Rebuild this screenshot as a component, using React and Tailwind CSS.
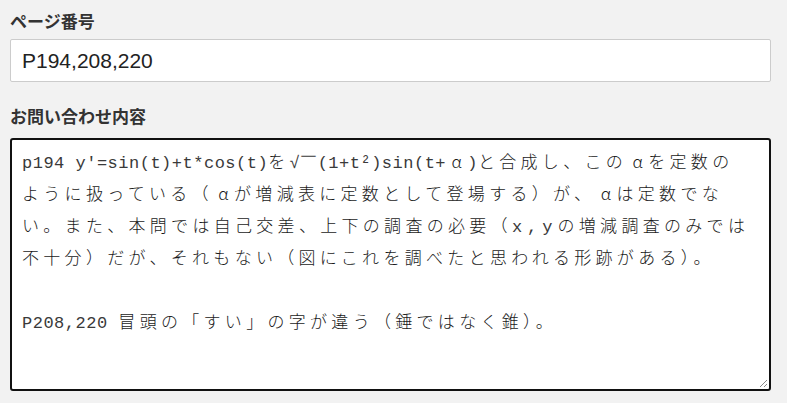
import React from 'react';

const lines = [
  "p194 y'=sin(t)+t*cos(t)を√￣(1+t²)sin(t+α)と合成し、このαを定数の",
  "ように扱っている（αが増減表に定数として登場する）が、αは定数でな",
  "い。また、本問では自己交差、上下の調査の必要（x,yの増減調査のみでは",
  "不十分）だが、それもない（図にこれを調べたと思われる形跡がある）。",
  "",
  "P208,220 冒頭の「すい」の字が違う（錘ではなく錐）。",
];

// split a line into half-width / full-width runs; α gets its own cell
function segments(line) {
  const out = [];
  for (const ch of line) {
    const kind = ch === 'α' ? 'alpha' : /[\x20-\x7E²√￣]/.test(ch) ? 'half' : 'full';
    const last = out[out.length - 1];
    if (last && last.kind === kind && kind !== 'alpha') last.text += ch;
    else out.push({ kind, text: ch });
  }
  return out;
}

function Line({ text }) {
  if (!text) return <div className="h-[32px]" />;
  return (
    <div className="h-[32px] leading-[32px] whitespace-pre">
      {segments(text).map((s, i) => {
        if (s.kind === 'half')
          return (
            <span
              key={i}
              className={
                s.text === 'x,y'
                  ? "font-['Liberation_Mono',monospace] text-[17px] text-[#3a3a3a] tracking-[5px]"
                  : "font-['Liberation_Mono',monospace] text-[17px] text-[#3a3a3a] tracking-[0.5px]"
              }
            >
              {s.text}
            </span>
          );
        if (s.kind === 'alpha')
          return <span key={i} className="inline-block w-[21.2px] text-center font-['Noto_Sans_CJK_JP',sans-serif] font-light text-[17px]">{s.text}</span>;
        return <span key={i} className="font-['Noto_Sans_CJK_JP',sans-serif] font-light text-[17px] tracking-[4.3px]">{s.text}</span>;
      })}
    </div>
  );
}

export default function App() {
  return (
    <div className="min-h-[403px] bg-[#f2f2f2] pl-[10px] pr-[16px] pt-[9px] font-['Noto_Sans_CJK_JP',sans-serif]">
      <label className="block text-[17px] leading-[24px] font-bold text-[#333]">ページ番号</label>
      <div className="mt-[6px] h-[43px] bg-white border border-[#cccccc] rounded-[2px] flex items-center px-[11px]">
        <span className="font-['Liberation_Sans',sans-serif] text-[21px] text-[#222]">P194,208,220</span>
      </div>

      <label className="block mt-[22px] text-[17px] leading-[24px] font-bold text-[#333]">お問い合わせ内容</label>
      <div className="relative mt-[10px] h-[253px] bg-white border-2 border-[#111] rounded-[3px] pl-[10px] pt-[5px] text-[#1a1a1a] overflow-hidden">
        {lines.map((l, i) => (
          <Line key={i} text={l} />
        ))}
        <svg className="absolute right-[1px] bottom-[1px]" width="10" height="10" viewBox="0 0 10 10">
          <path d="M9 2 L2 9 M9 6 L6 9" stroke="#888" strokeWidth="1" />
        </svg>
      </div>
    </div>
  );
}
